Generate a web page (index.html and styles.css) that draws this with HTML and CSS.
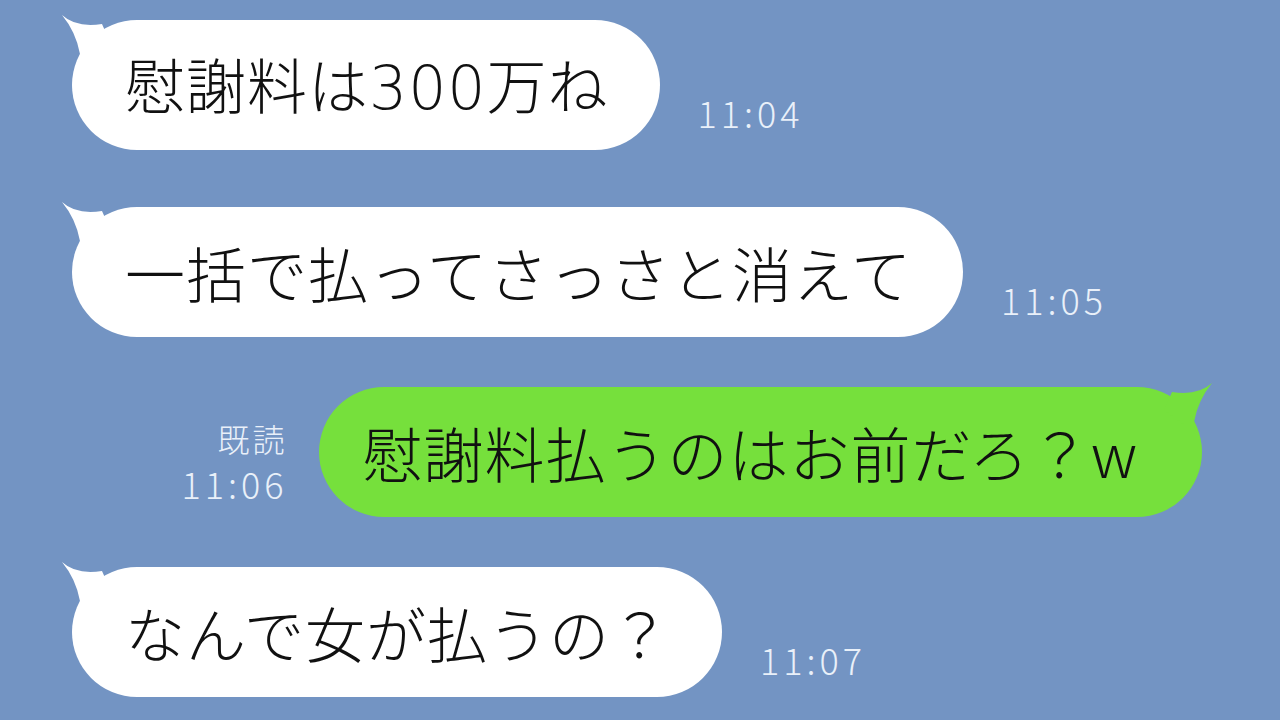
FILE: index.html
```html
<!DOCTYPE html>
<html lang="ja">
<head>
<meta charset="utf-8">
<link rel="stylesheet" href="styles.css">
</head>
<body>
<div class="chat">
  <div class="row row-in r1">
    <div class="bubble white">
      <svg class="tail tail-l" viewBox="0 0 60 50" width="60" height="50"><path d="M4 3 Q18 16 44 12 L52 30 L30 46 L22 42 Q18 20 4 3 Z"/></svg>
      <span class="msg">慰謝料は<span class="num">300</span>万ね</span>
    </div>
    <div class="time">11:04</div>
  </div>
  <div class="row row-in r2">
    <div class="bubble white">
      <svg class="tail tail-l" viewBox="0 0 60 50" width="60" height="50"><path d="M4 3 Q18 16 44 12 L52 30 L30 46 L22 42 Q18 20 4 3 Z"/></svg>
      <span class="msg">一括で払ってさっさと消えて</span>
    </div>
    <div class="time">11:05</div>
  </div>
  <div class="row row-out r3">
    <div class="meta">
      <div class="read">既読</div>
      <div class="time">11:06</div>
    </div>
    <div class="bubble green">
      <svg class="tail tail-r" viewBox="0 0 60 50" width="60" height="50"><path d="M4 3 Q18 16 44 12 L52 30 L30 46 L22 42 Q18 20 4 3 Z"/></svg>
      <span class="msg">慰謝料払うのはお前だろ？w</span>
    </div>
  </div>
  <div class="row row-in r4">
    <div class="bubble white">
      <svg class="tail tail-l" viewBox="0 0 60 50" width="60" height="50"><path d="M4 3 Q18 16 44 12 L52 30 L30 46 L22 42 Q18 20 4 3 Z"/></svg>
      <span class="msg">なんで女が払うの？</span>
    </div>
    <div class="time">11:07</div>
  </div>
</div>
</body>
</html>
```
FILE: styles.css
```css
html, body {
  margin: 0;
  padding: 0;
}
body {
  width: 1280px;
  height: 720px;
  overflow: hidden;
  background: #7394c3;
  font-family: "Noto Sans CJK JP", "Noto Sans", sans-serif;
}
.chat {
  display: flex;
  flex-direction: column;
  padding-top: 20px;
}
.row {
  display: flex;
  align-items: flex-end;
}
.row-in {
  padding-left: 72px;
}
.row-out {
  justify-content: flex-end;
  padding-right: 78px;
}
.r2 { margin-top: 57px; }
.r3 { margin-top: 50px; }
.r4 { margin-top: 50px; }
.bubble {
  position: relative;
  height: 130px;
  border-radius: 65px;
  display: flex;
  align-items: center;
  padding: 0 51px 0 53px;
  box-sizing: border-box;
}
.white { background: #ffffff; fill: #ffffff; }
.green { background: #76e03c; fill: #76e03c; padding: 0 64px 0 44px; }
.msg {
  font-size: 60px;
  font-weight: 300;
  line-height: 1;
  letter-spacing: 1px;
  color: #111111;
  white-space: nowrap;
}
.num {
  font-family: "DejaVu Sans", "Noto Sans", sans-serif;
  font-weight: 300;
  letter-spacing: 1px;
}
.tail {
  position: absolute;
  top: -8px;
}
.tail-l { left: -14px; }
.tail-r { right: -14px; transform: scaleX(-1); top: -7px; }
.time {
  font-size: 36px;
  font-weight: 300;
  line-height: 1;
  color: #e9f0f9;
  letter-spacing: 4px;
}
.row-in .time {
  margin-left: 38px;
  margin-bottom: 20px;
}
.meta {
  display: flex;
  flex-direction: column;
  align-items: flex-end;
  margin-right: 31px;
  margin-bottom: 16px;
  color: #e9f0f9;
}
.read {
  font-size: 32px;
  font-weight: 300;
  line-height: 1;
  margin-bottom: 11px;
  letter-spacing: 3px;
}
```
